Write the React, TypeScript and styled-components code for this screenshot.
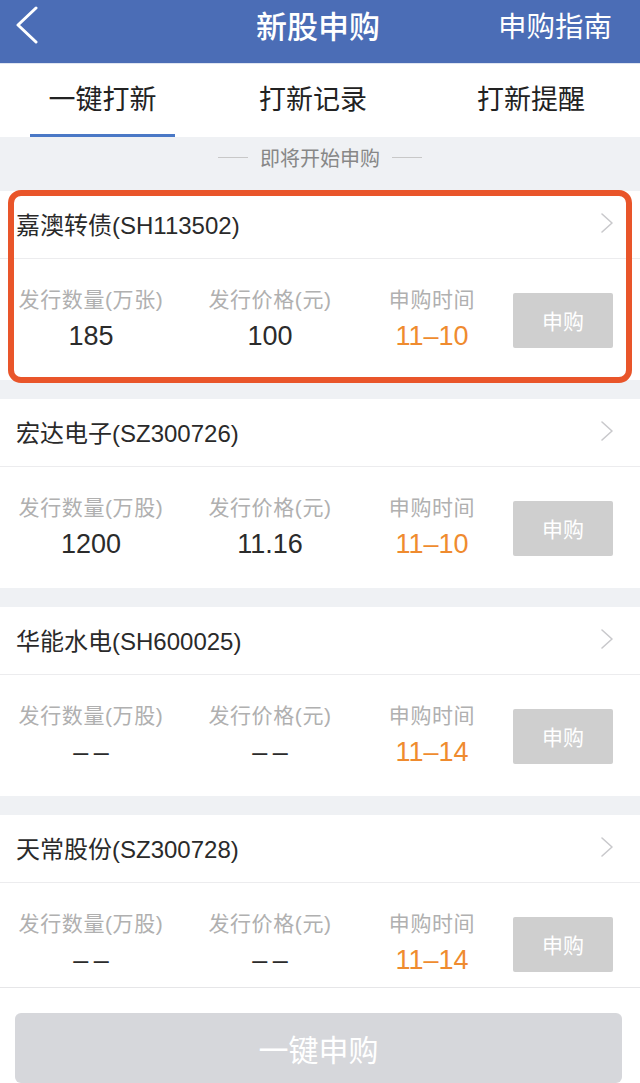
import React from "react";
import styled, { createGlobalStyle } from "styled-components";

type Stock = {
  name: string;
  code: string;
  unit: string;
  amount: string;
  price: string;
  date: string;
  highlighted?: boolean;
};

const EMPTY = "–\u2009–";

const stocks: Stock[] = [
  { name: "嘉澳转债", code: "SH113502", unit: "万张", amount: "185", price: "100", date: "11–10", highlighted: true },
  { name: "宏达电子", code: "SZ300726", unit: "万股", amount: "1200", price: "11.16", date: "11–10" },
  { name: "华能水电", code: "SH600025", unit: "万股", amount: EMPTY, price: EMPTY, date: "11–14" },
  { name: "天常股份", code: "SZ300728", unit: "万股", amount: EMPTY, price: EMPTY, date: "11–14" },
];

const tabs = ["一键打新", "打新记录", "打新提醒"];

export default function App() {
  return (
    <>
      <GlobalStyle />
      <Page>
        <NavBar>
          <BackButton>
            <svg width="26" height="38" viewBox="0 0 26 38" fill="none">
              <polyline
                points="22,2 4,19 22,36"
                stroke="#fff"
                strokeWidth="3"
                strokeLinecap="round"
                strokeLinejoin="round"
              />
            </svg>
          </BackButton>
          <NavTitle>新股申购</NavTitle>
          <NavAction>申购指南</NavAction>
        </NavBar>

        <TabBar>
          {tabs.map((t, i) => (
            <Tab key={t} active={i === 0}>
              {t}
            </Tab>
          ))}
        </TabBar>

        <List>
          <SectionLabel>
            <Rule />
            即将开始申购
            <Rule />
          </SectionLabel>

          {stocks.map((s) => (
            <Card key={s.code}>
              <CardHeader>
                <CardTitle>
                  {s.name}({s.code})
                </CardTitle>
                <svg width="14" height="22" viewBox="0 0 14 22" fill="none">
                  <polyline
                    points="2,2 12,11 2,20"
                    stroke="#c9c9cc"
                    strokeWidth="1.6"
                    strokeLinecap="round"
                    strokeLinejoin="round"
                  />
                </svg>
              </CardHeader>
              <Stats>
                <Stat>
                  <StatLabel>发行数量({s.unit})</StatLabel>
                  <StatValue>{s.amount}</StatValue>
                </Stat>
                <Stat>
                  <StatLabel>发行价格(元)</StatLabel>
                  <StatValue>{s.price}</StatValue>
                </Stat>
                <Stat>
                  <StatLabel>申购时间</StatLabel>
                  <StatValue accent>{s.date}</StatValue>
                </Stat>
                <BuyButton disabled>申购</BuyButton>
              </Stats>
              {s.highlighted && <HighlightFrame />}
            </Card>
          ))}
        </List>

        <Footer>
          <SubmitButton disabled>一键申购</SubmitButton>
        </Footer>
      </Page>
    </>
  );
}

const GlobalStyle = createGlobalStyle`
  body {
    margin: 0;
    font-family: "Liberation Sans", "Noto Sans CJK SC", sans-serif;
  }
`;

const Page = styled.div`
  width: 640px;
  height: 1083px;
  display: flex;
  flex-direction: column;
  overflow: hidden;
  background: #eff1f4;
`;

const NavBar = styled.div`
  height: 64px;
  flex-shrink: 0;
  box-sizing: border-box;
  padding: 0 28px 14px 14px;
  display: grid;
  grid-template-columns: 1fr auto 1fr;
  align-items: center;
  background: #4b6db6;
  color: #fff;
  border-bottom: 1px solid #dfe5f1;
`;

const BackButton = styled.div`
  display: flex;
  align-items: center;
`;

const NavTitle = styled.div`
  text-align: center;
  font-size: 31px;
  font-weight: 500;
  padding-left: 10px;
`;

const NavAction = styled.div`
  text-align: right;
  font-size: 28.5px;
`;

const TabBar = styled.div`
  height: 73px;
  flex-shrink: 0;
  display: grid;
  grid-template-columns: 204px 1fr 1fr;
  background: #fff;
`;

const Tab = styled.div<{ active?: boolean }>`
  display: flex;
  align-items: center;
  justify-content: center;
  font-size: 27px;
  color: #222;
  box-sizing: border-box;
  margin: 0 ${(p) => (p.active ? "29px 0 30px" : "0")};
  border-bottom: 3px solid ${(p) => (p.active ? "#4a78c6" : "transparent")};
  padding-bottom: 3px;
`;

const List = styled.div`
  flex: 1;
  overflow: hidden;
  display: flex;
  flex-direction: column;
  gap: 19px;
`;

const SectionLabel = styled.div`
  height: 54px;
  margin-bottom: -19px;
  flex-shrink: 0;
  display: flex;
  align-items: center;
  justify-content: center;
  gap: 12px;
  font-size: 20px;
  color: #878787;
  padding-bottom: 14px;
  box-sizing: border-box;
`;

const Rule = styled.span`
  width: 30px;
  height: 1px;
  background: #c8c8c8;
`;

const Card = styled.div`
  position: relative;
  flex-shrink: 0;
  background: #fff;
`;

const CardHeader = styled.div`
  height: 68px;
  box-sizing: border-box;
  display: flex;
  align-items: center;
  justify-content: space-between;
  padding: 0 26px 3px 16px;
  border-bottom: 1px solid #ececee;
`;

const CardTitle = styled.div`
  font-size: 24px;
  color: #2a2a2a;
`;

const Stats = styled.div`
  height: 121px;
  display: grid;
  grid-template-columns: 182px 162px 148px 100px;
  column-gap: 7px;
  align-items: center;
  padding-bottom: 4px;
  box-sizing: border-box;
`;

const Stat = styled.div`
  display: flex;
  flex-direction: column;
  align-items: center;
  gap: 8px;
`;

const StatLabel = styled.div`
  font-size: 21px;
  letter-spacing: 0.6px;
  color: #b0b0b0;
  white-space: nowrap;
`;

const StatValue = styled.div<{ accent?: boolean }>`
  font-size: 27px;
  color: ${(p) => (p.accent ? "#ef8b2f" : "#2b2b2b")};
`;

const BuyButton = styled.button`
  height: 55px;
  border: none;
  border-radius: 2px;
  background: #cfcfcf;
  color: #fff;
  font-family: inherit;
  font-size: 21px;
  margin-top: 5px;
`;

const HighlightFrame = styled.div`
  position: absolute;
  left: 8px;
  right: 8px;
  top: -1px;
  bottom: -3px;
  border: 6px solid #e9552a;
  border-radius: 13px;
  pointer-events: none;
`;

const Footer = styled.div`
  height: 96px;
  flex-shrink: 0;
  box-sizing: border-box;
  padding: 25px 18px 0 15px;
  background: #fff;
  border-top: 1px solid #e6e6e8;
`;

const SubmitButton = styled.button`
  width: 100%;
  height: 70px;
  border: none;
  border-radius: 6px;
  background: #d6d7db;
  color: #fff;
  font-family: inherit;
  font-size: 30px;
`;
